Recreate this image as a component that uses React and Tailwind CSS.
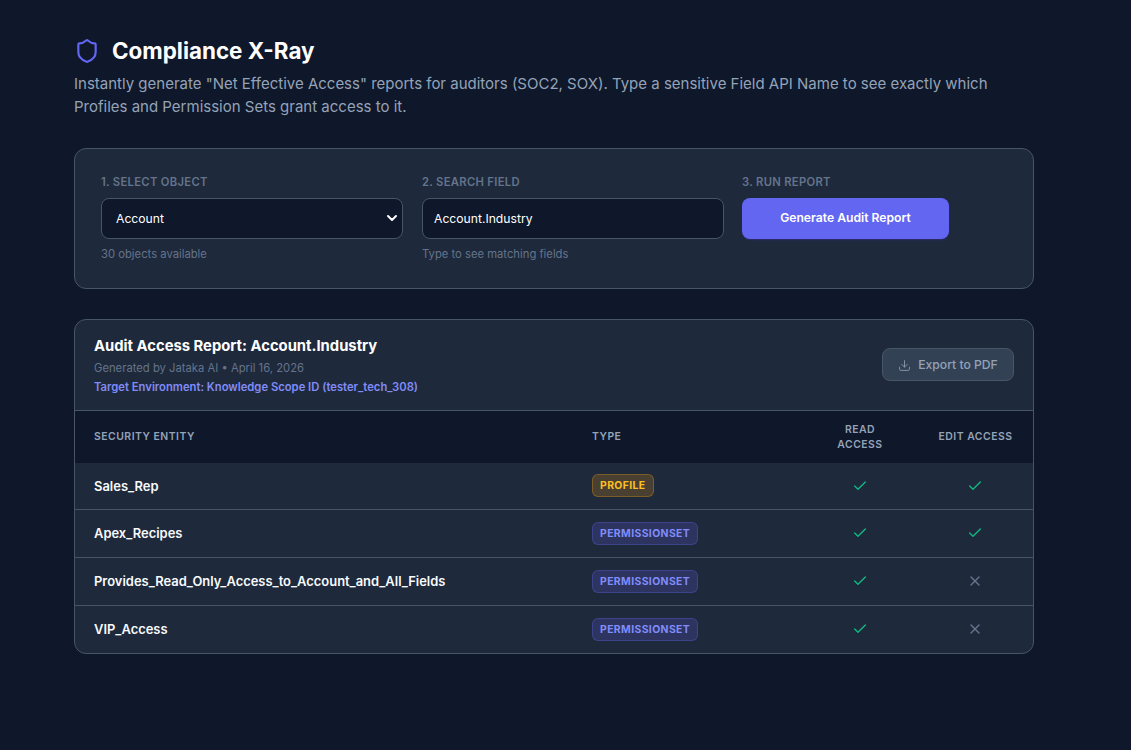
import { Shield, Download, Check, X, ChevronDown } from 'lucide-react';

const rows = [
  { name: 'Sales_Rep', type: 'PROFILE', read: true, edit: true, h: 'h-[46px]', nudge: 'pt-[1px]' },
  { name: 'Apex_Recipes', type: 'PERMISSIONSET', read: true, edit: true, h: 'h-[48px]', nudge: 'pb-[1px]' },
  { name: 'Provides_Read_Only_Access_to_Account_and_All_Fields', type: 'PERMISSIONSET', read: true, edit: false, h: 'h-[48px]', nudge: 'pb-[1px]' },
  { name: 'VIP_Access', type: 'PERMISSIONSET', read: true, edit: false, h: 'h-[48px]', nudge: 'pb-[1px]' },
];

function TypeBadge({ type }) {
  const cls = type === 'PROFILE'
    ? 'bg-[#f59e0b]/20 text-[#fbbf24] border-[#f59e0b]/30'
    : 'bg-[#6366f1]/20 text-[#818cf8] border-[#6366f1]/30';
  return (
    <span className={`block w-fit px-[7px] py-[3px] rounded-md border text-[10.4px] leading-[15px] font-bold tracking-[0.4px] ${cls}`}>
      {type}
    </span>
  );
}

function AccessIcon({ ok }) {
  return ok
    ? <Check size={16} strokeWidth={2} className="block mx-auto text-[#10b981]" />
    : <X size={16} strokeWidth={2} className="block mx-auto text-[#64748b]" />;
}

export default function App() {
  return (
    <div className="min-h-screen bg-[#0f172a]" style={{ fontFamily: "Inter, sans-serif" }}>
      <div className="w-[960px] ml-[74px] pt-[35px]">
        {/* Title */}
        <div className="flex items-center gap-[12px]">
          <Shield size={26} strokeWidth={2} className="text-[#6366f1]" />
          <h1 className="text-[22.4px] leading-[32px] font-bold text-white">Compliance X-Ray</h1>
        </div>
        <p className="mt-[5px] text-[15px] leading-[23px] text-[#94a3b8] w-[940px]">
          Instantly generate "Net Effective Access" reports for auditors (SOC2, SOX). Type a sensitive Field API Name to see exactly which Profiles and Permission Sets grant access to it.
        </p>

        {/* Query form */}
        <div className="mt-[30px] h-[141px] rounded-xl border border-[#475569] bg-[#1e293b] px-[26px] pt-[26px] flex gap-[19px]">
          <div className="w-[302px]">
            <div className="text-[11.25px] leading-[14px] font-semibold tracking-[0.3px] text-[#64748b]">1. SELECT OBJECT</div>
            <div className="relative mt-[9px]">
              <select className="block appearance-none w-full h-[41px] pt-[1px] rounded-lg border border-[#475569] bg-[#0f172a] text-white text-[12.16px] pl-[14px] outline-none">
                <option>Account</option>
              </select>
              <ChevronDown size={16} strokeWidth={3} className="absolute right-[3px] top-[12px] text-white pointer-events-none" />
            </div>
            <div className="mt-[8px] text-[11.25px] leading-[14px] text-[#64748b]">30 objects available</div>
          </div>
          <div className="w-[302px]">
            <div className="text-[11.25px] leading-[14px] font-semibold tracking-[0.3px] text-[#64748b]">2. SEARCH FIELD</div>
            <input
              readOnly
              value="Account.Industry"
              className="block mt-[9px] w-full h-[41px] rounded-lg border border-[#475569] bg-[#0f172a] text-white text-[12.16px] px-[11px] outline-none"
            />
            <div className="mt-[8px] text-[11.25px] leading-[14px] text-[#64748b]">Type to see matching fields</div>
          </div>
          <div className="-ml-[1px]">
            <div className="text-[11.25px] leading-[14px] font-semibold tracking-[0.3px] text-[#64748b]">3. RUN REPORT</div>
            <button className="block mt-[9px] w-[207px] h-[41px] pb-[1px] rounded-lg bg-[#6366f1] text-white text-[12.16px] font-semibold shadow-[0_1px_2px_rgba(49,46,129,0.8)]">
              Generate Audit Report
            </button>
          </div>
        </div>

        {/* Report */}
        <div className="mt-[30px] rounded-xl border border-[#475569] bg-[#1e293b] overflow-hidden">
          <div className="h-[91px] px-[19px] flex items-center justify-between border-b border-[#475569]">
            <div>
              <h2 className="text-[14.8px] leading-[20px] font-bold text-white">Audit Access Report: Account.Industry</h2>
              <div className="mt-[5px] text-[11.25px] leading-[14px] text-[#64748b]">Generated by Jataka AI • April 16, 2026</div>
              <div className="mt-[5px] text-[11.25px] leading-[14px] font-semibold text-[#818cf8]">Target Environment: Knowledge Scope ID (tester_tech_308)</div>
            </div>
            <button className="w-[132px] h-[33px] mb-[1px] pt-[1px] rounded-lg border border-[#475569] bg-[#334155] text-[#94a3b8] text-[12.16px] font-medium flex items-center justify-center gap-[7px]">
              <Download size={13} strokeWidth={1.5} />
              Export to PDF
            </button>
          </div>
          <table className="w-full table-fixed border-collapse">
            <colgroup>
              <col className="w-[498px]" />
              <col className="w-[229px]" />
              <col className="w-[116px]" />
              <col />
            </colgroup>
            <thead>
              <tr className="h-[52px] bg-[#0f172a] text-[10.4px] leading-[15px] font-semibold tracking-[0.5px] text-[#94a3b8]">
                <th className="px-[19px] pb-[1px] text-left font-semibold">SECURITY ENTITY</th>
                <th className="px-[19px] pb-[1px] text-left font-semibold">TYPE</th>
                <th className="px-[19px] text-center font-semibold">READ ACCESS</th>
                <th className="pb-[1px] text-center font-semibold">EDIT ACCESS</th>
              </tr>
            </thead>
            <tbody>
              {rows.map((r, i) => (
                <tr key={r.name} className={`${r.h} ${i > 0 ? 'border-t border-[#475569]' : ''}`}>
                  <td className={`px-[19px] text-[12.95px] font-semibold text-[#f8fafc] ${i === 0 ? 'pt-[2px]' : 'pt-[1px]'}`}>{r.name}</td>
                  <td className={`px-[19px] ${i === 0 ? 'pb-[1px]' : ''}`}><TypeBadge type={r.type} /></td>
                  <td className={`text-center ${r.nudge}`}><AccessIcon ok={r.read} /></td>
                  <td className={`pr-[1px] text-center ${r.nudge}`}><AccessIcon ok={r.edit} /></td>
                </tr>
              ))}
            </tbody>
          </table>
        </div>
      </div>
    </div>
  );
}
